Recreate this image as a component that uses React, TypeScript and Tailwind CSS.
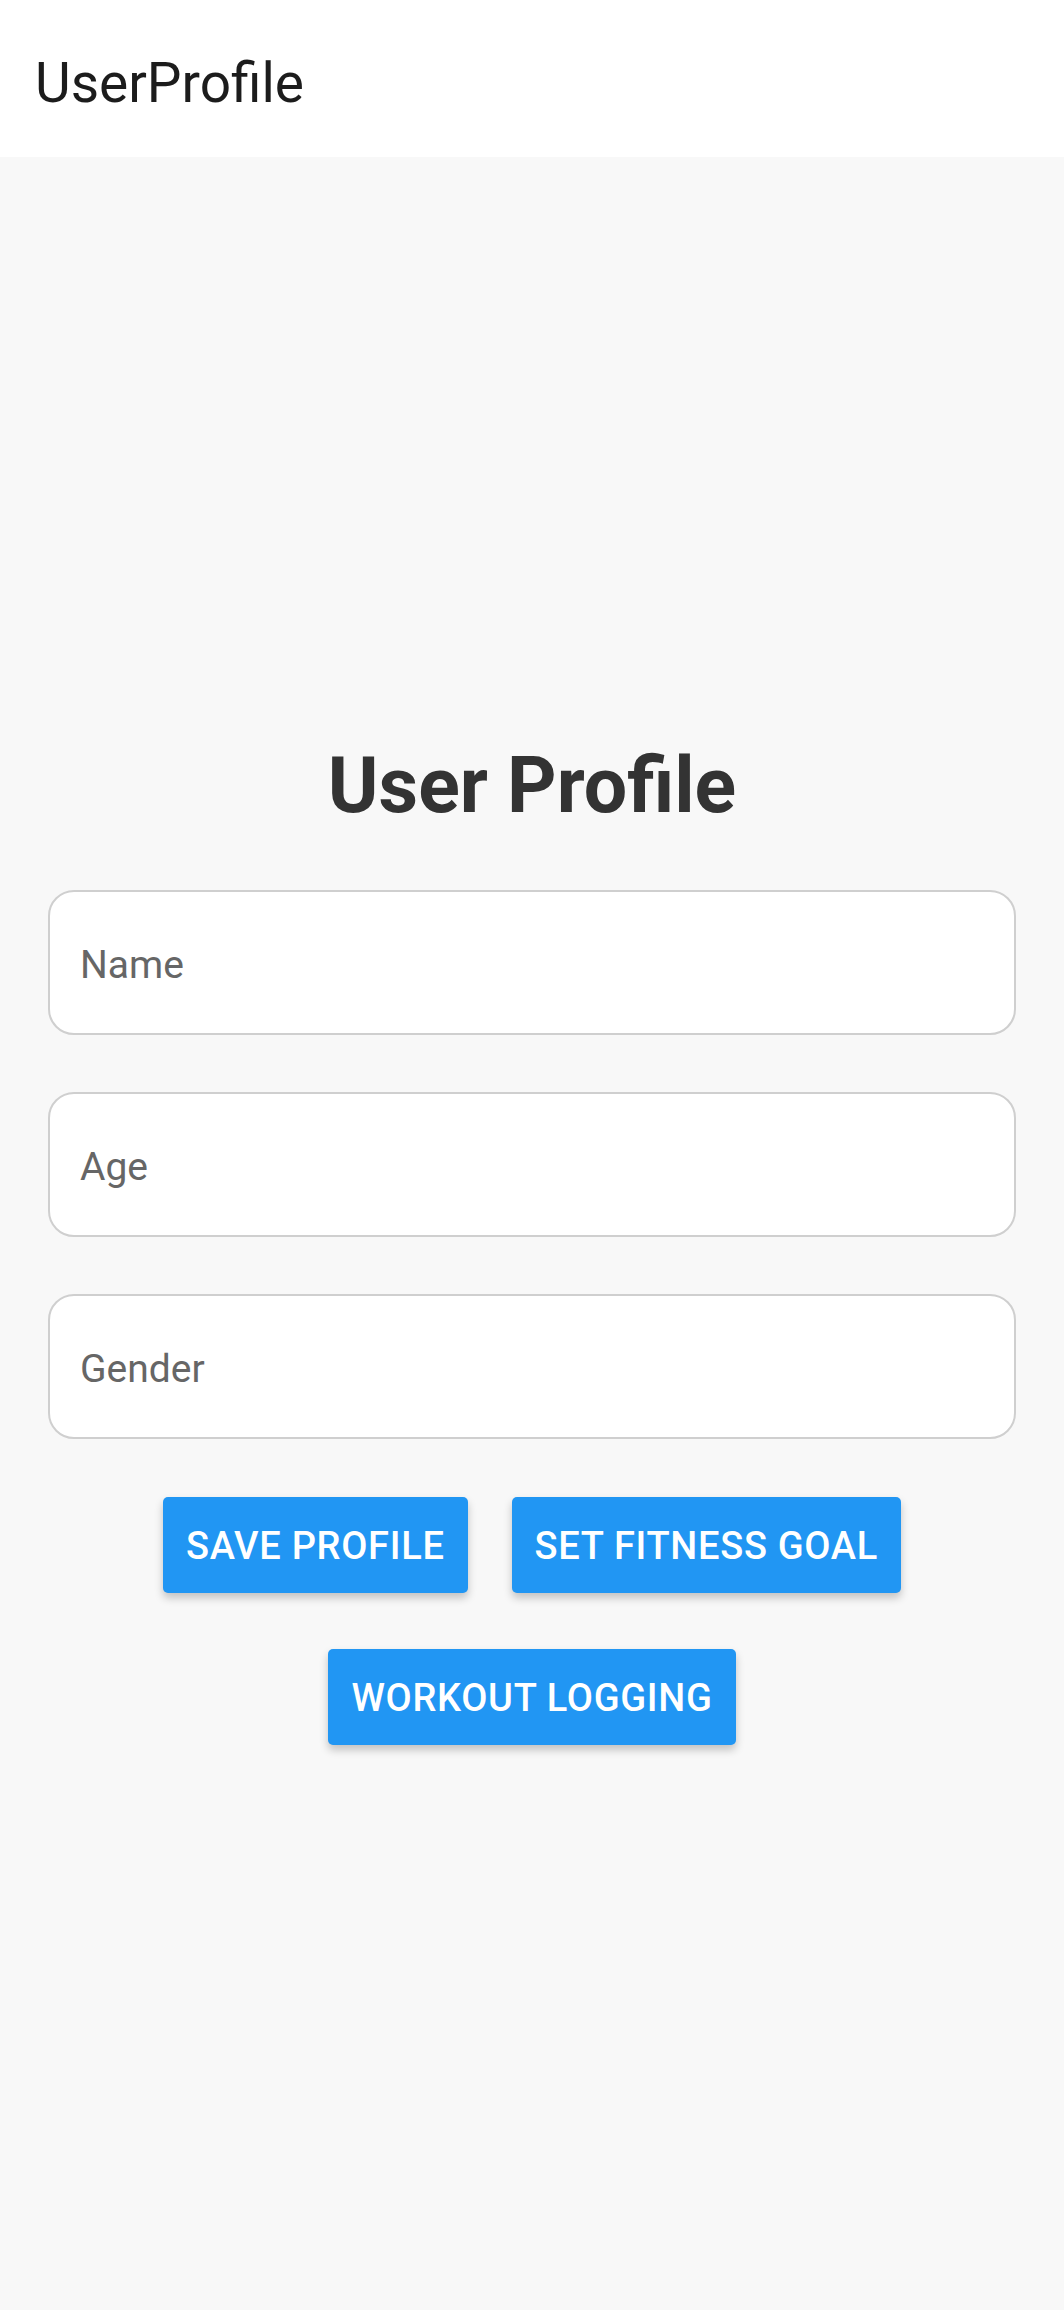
import React from 'react'

const font = { fontFamily: 'Roboto, "Noto Sans", sans-serif' }

// Outlined text field
function Field({ label }: { label: string }) {
  return (
    <input
      type="text"
      placeholder={label}
      className="w-full h-[145px] rounded-[26px] border-2 border-[#cfcfcf] bg-white pl-[30px] pr-[32px] pt-[5px] text-[39px] text-[#333] placeholder:text-[#666] outline-none"
    />
  )
}

function ActionButton({ children }: { children: React.ReactNode }) {
  return (
    <button className="h-[96px] px-[23px] pt-[2px] rounded-[5px] bg-[#2196f3] text-white text-[38px] font-medium uppercase tracking-[0.7px] leading-none shadow-[0_5px_8px_rgba(0,0,0,0.22)]">
      {children}
    </button>
  )
}

export default function App() {
  return (
    <div className="min-h-screen flex flex-col bg-[#f8f8f8]" style={font}>
      {/* Top app bar */}
      <header className="h-[157px] shrink-0 bg-white pl-[35px] pt-[56px]">
        <h1 className="text-[55px] leading-none text-[#1c1c1c]">UserProfile</h1>
      </header>

      <main className="flex-1 flex flex-col justify-center px-12 pt-[25px]">
        <h2 className="text-center text-[77px] leading-none font-bold text-[#333]">User Profile</h2>

        <div className="mt-[65px] flex flex-col gap-[57px]">
          <Field label="Name" />
          <Field label="Age" />
          <Field label="Gender" />
        </div>

        <div className="mt-[58px] flex flex-wrap justify-center gap-x-[44px] gap-y-[56px] px-[100px]">
          <ActionButton>Save Profile</ActionButton>
          <ActionButton>Set Fitness Goal</ActionButton>
          <ActionButton>Workout Logging</ActionButton>
        </div>
      </main>
    </div>
  )
}
